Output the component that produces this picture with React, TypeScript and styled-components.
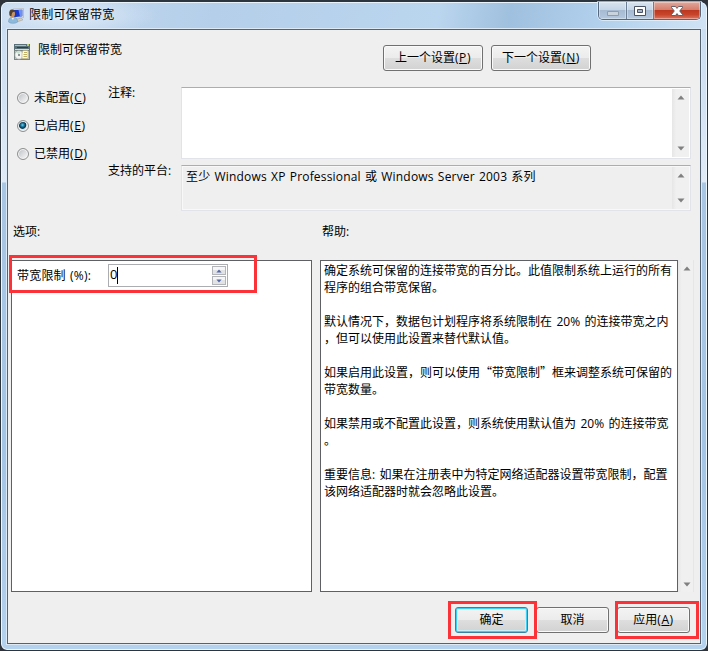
import React from "react";
import styled, { createGlobalStyle, css } from "styled-components";

const Global = createGlobalStyle`
  * { box-sizing: border-box; }
  html, body { margin: 0; padding: 0; background: #30343a; overflow: hidden; }
  body, button, input {
    font-family: "Open Sans", "Noto Sans CJK SC", sans-serif;
    font-size: 12px;
    line-height: 17px;
    color: #000;
  }
  u { text-underline-offset: 1px; text-decoration-thickness: 1px; text-decoration-skip-ink: none; }
`;

const Window = styled.div`
  width: 708px;
  height: 651px;
  border: 1px solid #2c343d;
  border-top-width: 2px;
  border-radius: 8px 8px 7px 7px;
  padding: 0 6px 6px 6px;
  background: linear-gradient(180deg, #c9dcf1 0, #d3e2f3 100px, #e0ebf6 180px, #a9c6e3 181px, #a5c5e6 450px, #b4d1ed 100%);
  box-shadow: inset 0 0 0 1px #eef6fd;
  display: flex;
  flex-direction: column;
`;

const TitleBar = styled.header`
  height: 27px;
  margin: 0 -5px;
  padding: 0 5px 0 2px;
  display: flex;
  align-items: flex-start;
  border-radius: 6px 6px 0 0;
  border-top: 1px solid #e8f3fc;
  background:
    radial-gradient(ellipse 90px 22px at 65px 12px, rgba(235, 243, 251, 0.75), rgba(235, 243, 251, 0)),
    linear-gradient(100deg, #c6daf0 0%, #b5cfea 30%, #bad5ee 62%, #9fc0de 72%, #a9c9e7 79%, #bbd7f0 90%, #d1e3f5 100%);
`;

const TitleIcon = styled.svg`
  width: 16px;
  height: 16px;
  margin: 5px 5px 0 4px;
`;

const WindowTitle = styled.div`
  flex: 1;
  padding-top: 3px;
  letter-spacing: 0.2px;
`;

const Controls = styled.div`
  display: flex;
  height: 18px;
  margin-top: -1px;
  border: 1px solid #56687c;
  border-top: 0;
  border-radius: 0 0 5px 5px;
  overflow: hidden;
  box-shadow: 0 0 0 1px rgba(240, 248, 255, 0.6);
`;

const Control = styled.div<{ $kind: "min" | "max" | "close" }>`
  width: ${(p) => (p.$kind === "close" ? 46 : p.$kind === "min" ? 28 : 27)}px;
  display: flex;
  align-items: center;
  justify-content: center;
  padding-top: ${(p) => (p.$kind === "min" ? 5 : 0)}px;
  border-right: ${(p) => (p.$kind === "close" ? "0" : "1px solid #6b7e93")};
  box-shadow: inset 0 0 0 1px rgba(255, 255, 255, 0.35);
  background: ${(p) =>
    p.$kind === "close"
      ? "linear-gradient(#e2a89c 0, #d47b69 48%, #bd3820 50%, #c8452c 75%, #dc7762 100%)"
      : "linear-gradient(#d7e4f1 0, #c5d5e6 48%, #a6bbd1 50%, #b4c9df 100%)"};
`;

const Client = styled.main`
  flex: 1;
  border: 1px solid #536372;
  background: #efefef;
  display: flex;
  flex-direction: column;
  box-shadow: 0 0 0 1px #dceaf7;
`;

const Heading = styled.section`
  display: flex;
  height: 57px;
  padding: 14px 0 0 6px;
`;

const PolicyIcon = styled.svg`
  width: 16px;
  height: 16px;
`;

const PolicyName = styled.div`
  width: 345px;
  margin: -3px 0 0 8px;
`;

const NavButtons = styled.div`
  display: flex;
  gap: 8px;
  margin-top: 1px;
`;

const Button = styled.button<{ $width: number; $focused?: boolean }>`
  width: ${(p) => p.$width}px;
  height: 26px;
  padding: 0 0 1px;
  border: 1px solid #707070;
  border-radius: 3px;
  background: linear-gradient(#f3f3f3 0, #ececec 48%, #dedede 50%, #d2d2d2 100%);
  box-shadow: inset 0 0 0 1px #fafafa;
  white-space: nowrap;
  ${(p) =>
    p.$focused &&
    css`
      border-color: #3c7fa0;
      box-shadow: inset 0 0 0 1px #41d0f5, inset 0 0 0 2px #c8f0fb;
    `}
`;

const AccelText = styled.span`
  letter-spacing: 0.6px;
`;

const Settings = styled.section`
  display: grid;
  grid-template-columns: 100px 73px 510px;
  height: 124px;
`;

const RadioList = styled.div`
  display: flex;
  flex-direction: column;
  gap: 11px;
  padding: 2px 0 0 9px;
`;

const RadioRow = styled.label`
  display: flex;
  align-items: center;
  gap: 5px;
  height: 17px;
  white-space: nowrap;
`;

const Dot = styled.span<{ $checked?: boolean }>`
  width: 12px;
  height: 12px;
  margin-top: 1px;
  border-radius: 50%;
  border: 1px solid #8e8f8f;
  box-shadow: inset 0 0 0 1px #f6f6f6;
  background: ${(p) =>
    p.$checked
      ? "radial-gradient(circle at 45% 40%, #6fd0ee 0, #1f83ad 1.5px, #0d3952 3px, #174a63 3.5px, #dfe5e8 4.2px)"
      : "linear-gradient(135deg, #c4c8cc 15%, #f3f3f3 85%)"};
`;

const FieldLabels = styled.div`
  display: flex;
  flex-direction: column;
  gap: 61px;
  margin-top: -3px;
  white-space: nowrap;
`;

const Fields = styled.div`
  display: flex;
  flex-direction: column;
  gap: 6px;
`;

const TextBox = styled.div<{ $height: number; $readOnly?: boolean }>`
  height: ${(p) => p.$height}px;
  display: flex;
  justify-content: space-between;
  border: 1px solid #e2e3ea;
  border-top-color: #abadb3;
  background: ${(p) => (p.$readOnly ? "#efefef" : "#fff")};
  box-shadow: inset 0 0 0 1px ${(p) => (p.$readOnly ? "#f8f8f8" : "#fff")};
`;

const TextValue = styled.div`
  padding: 2px 0 0 4px;
  white-space: nowrap;
  letter-spacing: 0.18px;
  word-spacing: 0.9px;
`;

const Scroll = styled.div<{ $pane?: boolean }>`
  width: ${(p) => (p.$pane ? 16 : 17)}px;
  margin: ${(p) => (p.$pane ? "0" : "1px 1px 1px 0")};
  padding: ${(p) => (p.$pane ? "6px 0 5px 2px" : "6px 0 6px")};
  display: flex;
  flex-direction: column;
  justify-content: space-between;
  align-items: center;
  background: linear-gradient(90deg, #e6e6e6, #f0f0f0 25%, #f0f0f0);
  border-right: ${(p) => (p.$pane ? "1px solid #e6e6e6" : "0")};
`;

const ArrowSvg = styled.svg<{ $small?: boolean }>`
  width: ${(p) => (p.$small ? 6 : 8)}px;
  height: ${(p) => (p.$small ? 4 : 5)}px;
  display: block;
`;

const Captions = styled.div`
  display: grid;
  grid-template-columns: 309px 1fr;
  height: 49px;
  padding: 12px 0 0 5px;
`;

const Panes = styled.section`
  display: grid;
  grid-template-columns: 301px 8px 358px 16px;
  height: 332px;
  padding-left: 3px;
`;

const OptionsPane = styled.div`
  border: 1px solid #5f6063;
  background: #fff;
`;

const HelpPane = styled(OptionsPane)`
  grid-column: 3;
  padding: 1px 0 0 3px;
  white-space: pre;
  word-spacing: 1.3px;
`;

const WideQuote = styled.span`
  font-family: "Noto Sans CJK SC", sans-serif;
  line-height: 1;
`;

const Option = styled.div`
  display: flex;
  align-items: center;
  padding: 3px 0 0 5px;
`;

const OptionLabel = styled.span`
  width: 91px;
  white-space: nowrap;
  letter-spacing: 0.2px;
  word-spacing: 1px;
`;

const Spinner = styled.div`
  width: 120px;
  height: 23px;
  display: flex;
  justify-content: space-between;
  border: 1px solid #abadb3;
  padding: 1px;
  background: #fff;
`;

const SpinValue = styled.div`
  display: flex;
  line-height: 17px;
  font-size: 13px;
`;

const Caret = styled.span`
  width: 1px;
  height: 17px;
  margin-top: 1px;
  background: #000;
`;

const SpinButtons = styled.div`
  width: 14px;
  display: flex;
  flex-direction: column;
  gap: 1px;
`;

const SpinButton = styled.div`
  flex: 1;
  display: flex;
  align-items: center;
  justify-content: center;
  border: 1px solid #b2b4b8;
  background: linear-gradient(#f6f6f6 45%, #e2e3e5 50%);
`;

const Footer = styled.footer`
  display: flex;
  justify-content: flex-end;
  gap: 8px;
  padding: 15px 10px 0 0;
`;

const Callout = styled.div<{ $x: number; $y: number; $w: number }>`
  position: absolute;
  left: ${(p) => p.$x}px;
  top: ${(p) => p.$y}px;
  width: ${(p) => p.$w}px;
  height: 38px;
  border: 3px solid #fb3238;
  pointer-events: none;
`;

function Accel({ letter }: { letter: string }) {
  return (
    <AccelText>
      (<u>{letter}</u>)
    </AccelText>
  );
}

function Arrow({ up, small }: { up?: boolean; small?: boolean }) {
  return (
    <ArrowSvg viewBox="0 0 8 5" $small={small}>
      <path d={up ? "M4 .5 7.5 4.5h-7z" : "M.5.5h7L4 4.5z"} fill={small ? "#5468a8" : "#808080"} />
    </ArrowSvg>
  );
}

function AppIcon() {
  return (
    <TitleIcon viewBox="0 0 16 16">
      <path d="M5 1 15.5.6v9L6 10.5z" fill="#e5e7e3" stroke="#a6aaa9" strokeWidth=".6" />
      <path d="M6 2 14.3 1.7v6.6L6 9.2z" fill="#1738c9" />
      <path d="M10.5 1.9 14.3 1.7v6.6l-2.3.2z" fill="#6e91f1" />
      <path d="M8 11.5 13 10l2 1.8-5.5 1.9z" fill="#d3d0c4" stroke="#98978f" strokeWidth=".5" />
      <path d="M.5 14C.5 10.5 2 9 5 9s4.5 2 4.7 5c-2 1.8-7.5 1.8-9.2 0z" fill="#8db9da" stroke="#6c97bb" strokeWidth=".5" />
      <ellipse cx="4.3" cy="5.7" rx="2.7" ry="3.5" fill="#c7935f" />
      <path d="M1.4 6.5C.8 3 2 1.4 4.2 1.5c2 0 2.8 1.2 2.8 2.3C4.5 3.5 3.7 5 3.5 8 2.4 8.3 1.6 7.7 1.4 6.5z" fill="#51402f" />
      <path d="m3.5 10 1.5 2 1-2.3z" fill="#eef5fb" />
    </TitleIcon>
  );
}

function SettingIcon() {
  return (
    <PolicyIcon viewBox="0 0 16 16">
      <path d="M0 0h16v16H0z" fill="#7a8583" />
      <path d="M0 0h16v6H0z" fill="#5a7079" />
      <path d="M1 1h11v1H1z" fill="#a9c1c0" />
      <path d="M3 3h11v1H3z" fill="#29319a" />
      <path d="M1 5h14v1H1z" fill="#d7dcd5" />
      <path d="M13 0h2v2h-2z" fill="#b9cf62" />
      <path d="M1 7h14v8H1z" fill="#bfc6c0" />
      <circle cx="5" cy="11" r="4.2" fill="#f4f4f3" stroke="#929994" strokeWidth=".6" />
      <circle cx="5" cy="11" r="1" fill="#6a7475" />
      <path d="m2 8.5 3 1.5 2-3z" fill="#c4e2cb" />
      <path d="M9 6.5h5v8H8v-5z" fill="#fffbe0" stroke="#a69b61" strokeWidth=".5" />
      <path d="M10 8.5h3M9.5 10.5H13M9.5 12.5H13" stroke="#b09b45" strokeWidth=".8" />
    </PolicyIcon>
  );
}

export default function App() {
  return (
    <>
      <Global />
      <Window>
        <TitleBar>
          <AppIcon />
          <WindowTitle>限制可保留带宽</WindowTitle>
          <Controls>
            <Control $kind="min">
              <svg width="12" height="5" viewBox="0 0 12 5">
                <path d="M.5.5h11v4H.5z" fill="#c8d3dd" stroke="#8d9dac" />
              </svg>
            </Control>
            <Control $kind="max">
              <svg width="12" height="10" viewBox="0 0 12 10">
                <path d="M.5.5h11v9H.5z" fill="#fff" stroke="#4b5362" />
                <path d="M3.5 3.5h5v3h-5z" fill="#a7b6c8" stroke="#4b5362" />
              </svg>
            </Control>
            <Control $kind="close">
              <svg width="12" height="10" viewBox="0 0 12 10">
                <path d="M.5.5h4L6 2.4 7.5.5h4v1L8.7 5l2.8 3.5v1h-4L6 7.6 4.5 9.5h-4v-1L3.3 5 .5 1.5z" fill="#fff" stroke="#555763" strokeWidth=".9" />
              </svg>
            </Control>
          </Controls>
        </TitleBar>
        <Client>
          <Heading>
            <SettingIcon />
            <PolicyName>限制可保留带宽</PolicyName>
            <NavButtons>
              <Button $width={100}>上一个设置<Accel letter="P" /></Button>
              <Button $width={100}>下一个设置<Accel letter="N" /></Button>
            </NavButtons>
          </Heading>
          <Settings>
            <RadioList>
              <RadioRow><Dot /><span>未配置<Accel letter="C" /></span></RadioRow>
              <RadioRow><Dot $checked /><span>已启用<Accel letter="E" /></span></RadioRow>
              <RadioRow><Dot /><span>已禁用<Accel letter="D" /></span></RadioRow>
            </RadioList>
            <FieldLabels>
              <span>注释:</span>
              <span>支持的平台:</span>
            </FieldLabels>
            <Fields>
              <TextBox $height={72}>
                <TextValue />
                <Scroll><Arrow up /><Arrow /></Scroll>
              </TextBox>
              <TextBox $height={46} $readOnly>
                <TextValue>至少 Windows XP Professional 或 Windows Server 2003 系列</TextValue>
                <Scroll><Arrow up /><Arrow /></Scroll>
              </TextBox>
            </Fields>
          </Settings>
          <Captions>
            <span>选项:</span>
            <span>帮助:</span>
          </Captions>
          <Panes>
            <OptionsPane>
              <Option>
                <OptionLabel>带宽限制 (%):</OptionLabel>
                <Spinner>
                  <SpinValue>0<Caret /></SpinValue>
                  <SpinButtons>
                    <SpinButton><Arrow up small /></SpinButton>
                    <SpinButton><Arrow small /></SpinButton>
                  </SpinButtons>
                </Spinner>
              </Option>
            </OptionsPane>
            <HelpPane>
              {"确定系统可保留的连接带宽的百分比。此值限制系统上运行的所有\n程序的组合带宽保留。\n\n"}
              {"默认情况下，数据包计划程序将系统限制在 20% 的连接带宽之内\n，但可以使用此设置来替代默认值。\n\n"}
              {"如果启用此设置，则可以使用"}
              <WideQuote lang="zh-CN">“</WideQuote>
              {"带宽限制"}
              <WideQuote lang="zh-CN">”</WideQuote>
              {"框来调整系统可保留的\n带宽数量。\n\n"}
              {"如果禁用或不配置此设置，则系统使用默认值为 20% 的连接带宽\n。\n\n"}
              {"重要信息: 如果在注册表中为特定网络适配器设置带宽限制，配置\n该网络适配器时就会忽略此设置。"}
            </HelpPane>
            <Scroll $pane><Arrow up /><Arrow /></Scroll>
          </Panes>
          <Footer>
            <Button $width={73} $focused>确定</Button>
            <Button $width={73}>取消</Button>
            <Button $width={73}>应用<Accel letter="A" /></Button>
          </Footer>
        </Client>
      </Window>
      <Callout $x={9} $y={255} $w={248} />
      <Callout $x={448} $y={601} $w={89} />
      <Callout $x={615} $y={601} $w={84} />
    </>
  );
}
